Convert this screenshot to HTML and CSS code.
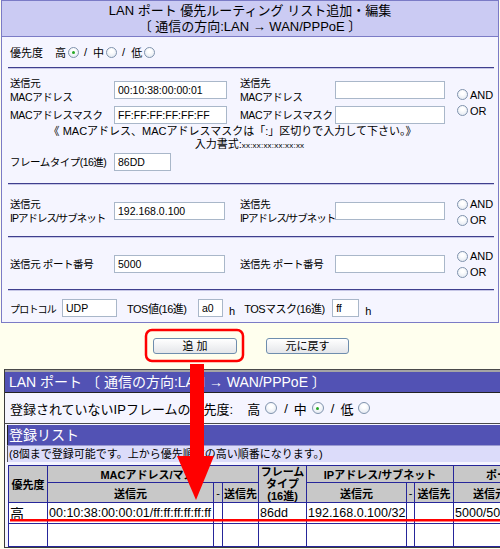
FILE: index.html
```html
<!DOCTYPE html>
<html lang="ja">
<head>
<meta charset="utf-8">
<title>LAN ポート 優先ルーティング</title>
<link rel="stylesheet" href="styles.css">
</head>
<body>
<div class="panel">
  <div class="panel-head">
    <div>LAN ポート 優先ルーティング リスト追加・編集</div>
    <div>〔 通信の方向:LAN → WAN/PPPoE 〕</div>
  </div>
  <div class="prio">
    <span class="plbl">優先度</span>
    <span class="pv">高</span><span class="radio on"></span>
    <span class="sl">/</span>
    <span class="pv">中</span><span class="radio"></span>
    <span class="sl">/</span>
    <span class="pv">低</span><span class="radio"></span>
  </div>
  <div class="sep"></div>
  <div class="sec mac">
    <div class="lbl">送信元<br>MACアドレス</div>
    <div class="cell"><input class="in w113" value="00:10:38:00:00:01"></div>
    <div class="lbl">送信先<br>MACアドレス</div>
    <div class="cell"><input class="in w110" value=""></div>
    <div class="andor span2">
      <div class="ao"><span class="radio"></span>AND</div>
      <div class="ao"><span class="radio"></span>OR</div>
    </div>
    <div class="lbl">MACアドレスマスク</div>
    <div class="cell"><input class="in w113" value="FF:FF:FF:FF:FF:FF"></div>
    <div class="lbl">MACアドレスマスク</div>
    <div class="cell"><input class="in w110" value=""></div>
    <div class="note">
      <div>《 MACアドレス、MACアドレスマスクは「:」区切りで入力して下さい。》</div>
      <div class="fmt">入力書式:<span class="xx">xx:xx:xx:xx:xx:xx</span></div>
    </div>
    <div class="lbl tight frame-lbl">フレームタイプ(16進)</div>
    <div class="cell"><input class="in w57 ml2" value="86DD"></div>
  </div>
  <div class="sep"></div>
  <div class="sec ip">
    <div class="lbl">送信元<br><span class="tight2">IPアドレス/サブネット</span></div>
    <div class="cell"><input class="in w111" value="192.168.0.100"></div>
    <div class="lbl">送信先<br><span class="tight2">IPアドレス/サブネット</span></div>
    <div class="cell"><input class="in w110" value=""></div>
    <div class="andor pt3">
      <div class="ao"><span class="radio"></span>AND</div>
      <div class="ao"><span class="radio"></span>OR</div>
    </div>
  </div>
  <div class="sep"></div>
  <div class="sec port">
    <div class="lbl">送信元 ポート番号</div>
    <div class="cell"><input class="in w111" value="5000"></div>
    <div class="lbl">送信先 ポート番号</div>
    <div class="cell"><input class="in w110" value=""></div>
    <div class="andor">
      <div class="ao"><span class="radio"></span>AND</div>
      <div class="ao"><span class="radio"></span>OR</div>
    </div>
  </div>
  <div class="sep"></div>
  <div class="proto">
    <span class="pl p1">プロトコル</span>
    <input class="in w55" value="UDP">
    <span class="pl tos">TOS値(16進)</span>
    <input class="in w25" value="a0">
    <span class="hh">h</span>
    <span class="pl tosm">TOSマスク(16進)</span>
    <input class="in w27" value="ff">
    <span class="hh">h</span>
  </div>
</div>

<div class="buttons">
  <button class="btn add" type="button">追 加</button>
  <button class="btn reset" type="button">元に戻す</button>
</div>

<div class="box box1">
  <div class="bar bar1">LAN ポート 〔 通信の方向:LAN → WAN/PPPoE 〕</div>
  <div class="prio2">
    <span class="p2lbl">登録されていないIPフレームの優先度:</span>
    <span class="pv2">高</span><span class="radio r2"></span>
    <span class="sl2">/</span>
    <span class="pv2">中</span><span class="radio r2 on"></span>
    <span class="sl2">/</span>
    <span class="pv2">低</span><span class="radio r2"></span>
  </div>
</div>
<div class="box box2">
  <div class="bar bar2">登録リスト</div>
  <div class="hint">(8個まで登録可能です。上から優先順位の高い順番になります。)</div>
  <table class="list">
    <colgroup>
      <col style="width:39px"><col style="width:166px"><col style="width:9px"><col style="width:36px">
      <col style="width:48px"><col style="width:100px"><col style="width:8px"><col style="width:39px">
      <col style="width:72px"><col style="width:8px"><col style="width:40px">
    </colgroup>
    <tr class="h1">
      <th rowspan="2">優先度</th>
      <th colspan="3">MACアドレス/マスク</th>
      <th rowspan="2" class="ft">フレーム<br>タイプ<br>(16進)</th>
      <th colspan="3">IPアドレス/サブネット</th>
      <th colspan="3">ポート番号</th>
    </tr>
    <tr class="h2">
      <th>送信元</th><th class="dash">-</th><th>送信先</th>
      <th>送信元</th><th class="dash">-</th><th>送信先</th>
      <th>送信元</th><th class="dash">-</th><th>送信先</th>
    </tr>
    <tr class="d1">
      <td class="hi">高</td><td>00:10:38:00:00:01/ff:ff:ff:ff:ff:ff</td><td></td><td></td>
      <td>86dd</td><td>192.168.0.100/32</td><td></td><td></td>
      <td>5000/5000</td><td></td><td></td>
    </tr>
    <tr class="d2">
      <td></td><td></td><td></td><td></td><td></td><td></td><td></td><td></td><td></td><td></td><td></td>
    </tr>
  </table>
</div>

<svg class="overlay" width="500" height="549" viewBox="0 0 500 549" aria-hidden="true">
  <rect x="146" y="330" width="97" height="31" rx="6" ry="6" fill="none" stroke="#ff0000" stroke-width="2.5"/>
  <rect x="190" y="364" width="14" height="94" fill="#ff0000"/>
  <polygon points="177,456 214,456 196,500" fill="#ff0000"/>
  <rect x="10" y="519" width="490" height="2.5" fill="#ff0000"/>
</svg>
</body>
</html>
```
FILE: styles.css
```css
html, body {
  margin: 0;
  padding: 0;
  overflow: hidden;
}
body {
  width: 500px;
  height: 549px;
  background: #ffffee;
  font-family: "Liberation Sans", "Noto Sans CJK JP", sans-serif;
  color: #000;
  position: relative;
}

/* ---------- top panel ---------- */
.panel {
  margin-left: 1px;
  width: 498px;
  box-sizing: border-box;
  border: 1px solid #7b7bc6;
  background: #f5f5ff;
}
.panel-head {
  height: 36px;
  box-sizing: border-box;
  padding-top: 2px;
  background: #cbcbf3;
  border-bottom: 1px solid #7b7bc6;
  text-align: center;
  font-size: 13px;
  line-height: 16px;
}
.prio {
  height: 30px;
  display: flex;
  align-items: center;
  padding-left: 8px;
  font-size: 11px;
}
.plbl { margin-right: 12px; }
.pv { margin-right: 2px; }
.sl { margin: 0 6px 0 5px; }

.sep {
  margin: 0 4px 0 6px;
  border-top: 1px solid #3f3f8e;
  border-bottom: 1px solid #c6c6e6;
}

.sec {
  display: grid;
  grid-template-columns: 104px 126px 95px 120px auto;
  align-items: center;
  padding-left: 8px;
  font-size: 11px;
}
.mac {
  grid-template-rows: 28px 21px 26px 22px;
  padding-top: 7px;
  padding-bottom: 10px;
}
.ip { padding-top: 8px; padding-bottom: 8px; }
.port { padding-top: 10px; padding-bottom: 9px; }

.lbl {
  font-size: 10.5px;
  line-height: 14px;
  white-space: nowrap;
  letter-spacing: -0.4px;
}
.tight { letter-spacing: -0.5px; }
.tight2 { letter-spacing: -1px; }
.frame-lbl { grid-column: 1; }
.cell { display: flex; align-items: center; }
.span2 {
  grid-column: 5;
  grid-row: 1 / span 2;
  align-self: center;
  margin-top: 4px;
}
.pt3 { padding-top: 3px; }
.andor { display: flex; flex-direction: column; padding-left: 2px; }
.ao {
  display: flex;
  align-items: center;
  height: 16px;
  font-size: 11px;
}
.ao .radio { margin-right: 2px; }

.note {
  grid-column: 1 / 5;
  text-align: center;
  font-size: 11px;
  line-height: 13px;
  align-self: stretch;
}
.fmt { padding-left: 34px; }
.xx { font-size: 8px; letter-spacing: 0.2px; }
.ml2 { margin-left: 2px; }

.in {
  -webkit-appearance: none;
  appearance: none;
  box-sizing: border-box;
  height: 18px;
  margin: 0;
  padding: 0 3px;
  border: 1px solid #a9b7c9;
  background: #ffffff;
  font-family: "Liberation Sans", "Noto Sans CJK JP", sans-serif;
  font-size: 10.5px;
  color: #000;
  outline: none;
}
.w113 { width: 113px; }
.w111 { width: 111px; }
.w110 { width: 110px; }
.w57 { width: 57px; }
.w55 { width: 55px; }
.w27 { width: 27px; }
.w25 { width: 25px; }

.proto {
  display: flex;
  align-items: center;
  padding: 8px 0 5px 8px;
  font-size: 11px;
}
.proto .pl { white-space: nowrap; letter-spacing: -0.5px; flex: none; }
.proto .p1 { width: 52px; font-size: 10px; letter-spacing: -0.8px; }
.proto .tos { margin-left: 10px; width: 71px; }
.proto .tosm { margin-left: 9px; width: 88px; }
.hh { margin-left: 6px; align-self: flex-end; line-height: 12px; }

/* ---------- radio ---------- */
.radio {
  display: inline-block;
  position: relative;
  width: 11px;
  height: 11px;
  box-sizing: border-box;
  border-radius: 50%;
  border: 1px solid #8093ad;
  background: radial-gradient(circle at 50% 35%, #ffffff 20%, #dde4ee 100%);
  flex: none;
}
.radio.on::after {
  content: "";
  position: absolute;
  left: 3px;
  top: 3px;
  width: 3px;
  height: 3px;
  border-radius: 50%;
  background: #25a825;
}
.radio.r2 { width: 12px; height: 12px; }
.radio.r2.on::after { left: 3.5px; top: 3.5px; }

/* ---------- buttons ---------- */
.buttons {
  display: flex;
  justify-content: center;
  gap: 29px;
  padding: 15px 0 15px;
  margin-left: 2px;
}
.btn {
  -webkit-appearance: none;
  appearance: none;
  height: 16px;
  margin: 0;
  padding: 0;
  box-sizing: border-box;
  border: 1px solid #6f8eae;
  border-radius: 3px;
  background: linear-gradient(#ffffff, #e4e6ea);
  font-family: "Liberation Sans", "Noto Sans CJK JP", sans-serif;
  font-size: 11px;
  line-height: 14px;
  color: #000;
}
.btn.add { width: 84px; }
.btn.reset { width: 83px; }

/* ---------- bottom list ---------- */
.box {
  margin-left: 4px;
  width: 620px;
  box-sizing: border-box;
  border-left: 1px solid #3a3a3a;
  border-top: 1px solid #4a4a4a;
}
.box1 {
  background: #f5f5ff;
}
.bar {
  height: 20px;
  line-height: 20px;
  background: #5252b4;
  color: #ffffff;
  font-size: 14px;
  white-space: nowrap;
}
.bar1 {
  border-top: 2px solid #a4a4a4;
  border-bottom: 1px solid #222;
  padding-left: 4px;
}
.prio2 {
  height: 30px;
  display: flex;
  align-items: center;
  padding-left: 5px;
  font-size: 13px;
  background: #f5f5ff;
}
.p2lbl { margin-right: 14px; }
.pv2 { margin-right: 5px; }
.sl2 { margin: 0 6px 0 7px; }

.box2 {
  background: #f5f5ff;
  padding: 1px 0 0 2px;
  height: 125px;
  border-bottom: 1px solid #3a3a3a;
}
.bar2 {
  padding-left: 1px;
  border-left: 1px solid #222;
}
.hint {
  height: 16px;
  line-height: 16px;
  background: #dcdcfa;
  border-top: 1px solid #9a9ad0;
  border-left: 1px solid #555;
  font-size: 11px;
  padding-left: 1px;
  white-space: nowrap;
}
.list {
  margin: 3px 0 0 1px;
  border-collapse: collapse;
  table-layout: fixed;
  width: 566px;
  background: #ffffff;
}
.list th, .list td {
  border: 1px solid #26269a;
  padding: 0;
  overflow: hidden;
  white-space: nowrap;
}
.list th {
  background: #c8c8c8;
  font-size: 11px;
  font-weight: bold;
  text-align: center;
}
.list tr.h1 { height: 17px; }
.list tr.h2 { height: 20px; }
.list th.ft { line-height: 12px; font-size: 11px; }
.list th.dash { font-weight: normal; }
.list tr.d1 { height: 18px; }
.list tr.d2 { height: 23px; }
.list td {
  font-size: 12.5px;
  text-align: left;
  padding-left: 1px;
}
.list td.hi { font-size: 14px; }

.overlay {
  position: absolute;
  left: 0;
  top: 0;
  pointer-events: none;
}
```
